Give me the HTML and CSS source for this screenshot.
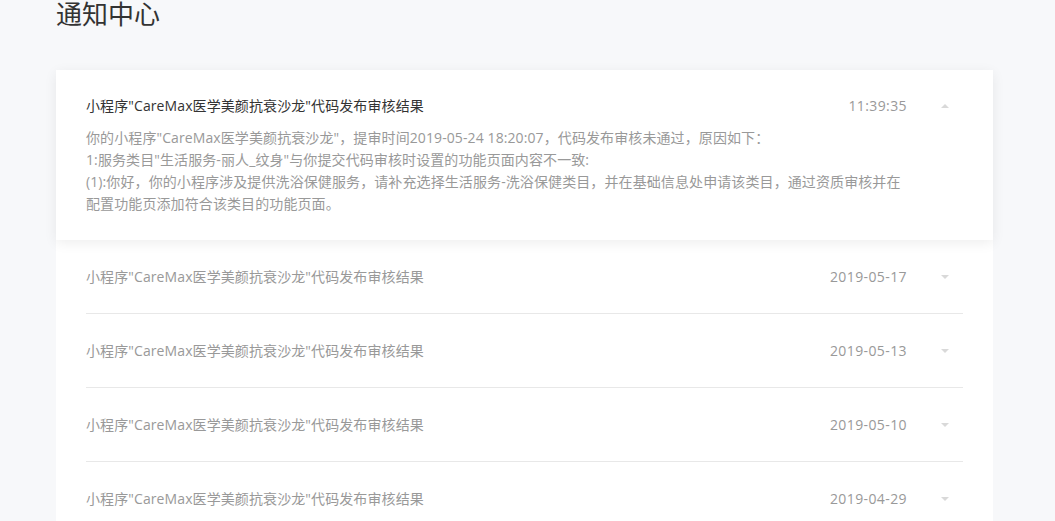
FILE: index.html
```html
<!DOCTYPE html>
<html lang="zh">
<head>
<meta charset="utf-8">
<title>通知中心</title>
<link rel="stylesheet" href="styles.css">
</head>
<body>
<div class="page">
  <h1 class="page-title">通知中心</h1>
  <div class="list">
    <div class="item item-open">
      <div class="row">
        <div class="item-title">小程序"CareMax医学美颜抗衰沙龙"代码发布审核结果</div>
        <div class="item-time">11:39:35</div>
        <span class="caret caret-up"></span>
      </div>
      <div class="item-body">
        <p>你的小程序"CareMax医学美颜抗衰沙龙"，提审时间2019-05-24 18:20:07，代码发布审核未通过，原因如下：</p>
        <p>1:服务类目"生活服务-丽人_纹身"与你提交代码审核时设置的功能页面内容不一致:</p>
        <p>(1):你好，你的小程序涉及提供洗浴保健服务，请补充选择生活服务-洗浴保健类目，并在基础信息处申请该类目，通过资质审核并在<br>配置功能页添加符合该类目的功能页面。</p>
      </div>
    </div>
    <div class="item">
      <div class="row">
        <div class="item-title">小程序"CareMax医学美颜抗衰沙龙"代码发布审核结果</div>
        <div class="item-time">2019-05-17</div>
        <span class="caret caret-down"></span>
      </div>
    </div>
    <div class="item">
      <div class="row">
        <div class="item-title">小程序"CareMax医学美颜抗衰沙龙"代码发布审核结果</div>
        <div class="item-time">2019-05-13</div>
        <span class="caret caret-down"></span>
      </div>
    </div>
    <div class="item">
      <div class="row">
        <div class="item-title">小程序"CareMax医学美颜抗衰沙龙"代码发布审核结果</div>
        <div class="item-time">2019-05-10</div>
        <span class="caret caret-down"></span>
      </div>
    </div>
    <div class="item">
      <div class="row">
        <div class="item-title">小程序"CareMax医学美颜抗衰沙龙"代码发布审核结果</div>
        <div class="item-time">2019-04-29</div>
        <span class="caret caret-down"></span>
      </div>
    </div>
  </div>
</div>
</body>
</html>
```
FILE: styles.css
```css
html, body {
  margin: 0;
  padding: 0;
  background: #f7f8fa;
}
body {
  font-family: "Open Sans", "Noto Sans CJK SC", sans-serif;
  color: #333;
}
.page {
  padding: 0 62px 0 56px;
}
.page-title {
  margin: 0;
  font-family: "Noto Sans CJK SC", sans-serif;
  font-size: 26px;
  font-weight: 400;
  line-height: 26px;
  color: #333;
}
.list {
  margin-top: 44px;
  background: #fff;
}
.item {
  padding: 0 30px;
}
.item-open {
  position: relative;
  z-index: 1;
  background: #fff;
  padding-top: 26px;
  padding-bottom: 25px;
  box-shadow: 0 3px 12px rgba(0, 0, 0, 0.07);
}
.row {
  display: flex;
  align-items: center;
  line-height: 20px;
  font-size: 14px;
}
.item-title {
  flex: 1;
  color: #999;
  letter-spacing: 0.1px;
}
.item-open .item-title {
  color: #333;
}
.item-time {
  color: #999;
  letter-spacing: 0.4px;
}
.caret {
  width: 0;
  height: 0;
  margin-left: 34px;
  margin-right: 14px;
  border-left: 4px solid transparent;
  border-right: 4px solid transparent;
}
.caret-up {
  border-bottom: 4px solid #d9d9d9;
}
.caret-down {
  border-top: 4px solid #d9d9d9;
}
.item-body {
  margin-top: 11px;
  font-size: 14px;
  line-height: 22px;
  color: #999;
  letter-spacing: 0.1px;
}
.item-body p {
  margin: 0;
}
.item:not(.item-open) .row {
  padding: 27px 0 26px;
  border-bottom: 1px solid #e8e8e8;
}
```
